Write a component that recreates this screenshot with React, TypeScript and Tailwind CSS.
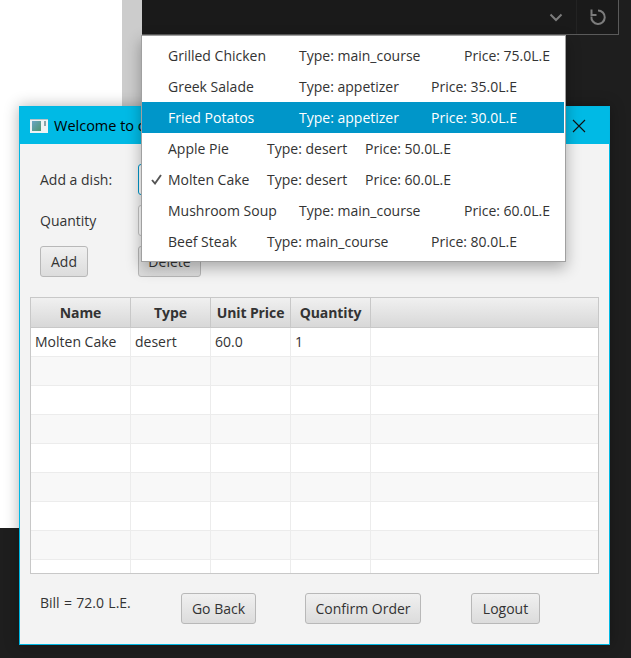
const menu = [
  { name: "Grilled Chicken", type: "Type: main_course", price: "Price: 75.0L.E", nameW: "w-[131px]", typeW: "w-[165px]" },
  { name: "Greek Salade", type: "Type: appetizer", price: "Price: 35.0L.E", nameW: "w-[131px]", typeW: "w-[132px]" },
  { name: "Fried Potatos", type: "Type: appetizer", price: "Price: 30.0L.E", nameW: "w-[131px]", typeW: "w-[132px]", active: true },
  { name: "Apple Pie", type: "Type: desert", price: "Price: 50.0L.E", nameW: "w-[99px]", typeW: "w-[98px]" },
  { name: "Molten Cake", type: "Type: desert", price: "Price: 60.0L.E", nameW: "w-[99px]", typeW: "w-[98px]", checked: true },
  { name: "Mushroom Soup", type: "Type: main_course", price: "Price: 60.0L.E", nameW: "w-[131px]", typeW: "w-[165px]" },
  { name: "Beef Steak", type: "Type: main_course", price: "Price: 80.0L.E", nameW: "w-[99px]", typeW: "w-[164px]" },
];

const columns = ["Name", "Type", "Unit Price", "Quantity"];
const emptyRows = [1, 2, 3, 4, 5, 6, 7];

function FxButton({ label, className }: { label: string; className: string }) {
  return (
    <button className={`h-[31px] shrink-0 rounded-[3px] border border-[#b8b8b8] bg-gradient-to-b from-[#f0f0f0] to-[#dcdcdc] text-[#333] ${className}`}>
      {label}
    </button>
  );
}

function Row({ cells, odd }: { cells: string[]; odd: boolean }) {
  return (
    <div className={`flex h-[29px] shrink-0 border-b border-[#ececec] ${odd ? "bg-[#f8f8f8]" : "bg-white"}`}>
      <div className="w-[100px] shrink-0 border-r border-[#ececec] pl-[4px] leading-[28px]">{cells[0]}</div>
      <div className="w-[80px] shrink-0 border-r border-[#ececec] pl-[4px] leading-[28px]">{cells[1]}</div>
      <div className="w-[80px] shrink-0 border-r border-[#ececec] pl-[4px] leading-[28px]">{cells[2]}</div>
      <div className="w-[80px] shrink-0 border-r border-[#ececec] pl-[4px] leading-[28px]">{cells[3]}</div>
      <div className="flex-1" />
    </div>
  );
}

export default function App() {
  return (
    <div className="relative h-[658px] w-[631px] overflow-hidden bg-[#1e1e1e] font-['Open_Sans','Noto_Sans',sans-serif] text-[14px] text-[#333]">
      {/* stuff behind the dialog */}
      <div className="absolute left-0 top-0 h-[528px] w-[122px] bg-white" />
      <div className="absolute left-[122px] top-0 h-[528px] w-[20px] bg-[#cccccc]" />
      <div className="absolute left-[142px] top-0 flex h-[35px] w-[477px] items-center justify-end border-b border-r border-[#5a5a5a] bg-[#1a1a1a]">
        <svg width="14" height="14" viewBox="0 0 14 14" fill="none" stroke="#7c7c7c" strokeWidth="2" className="mr-[13px]">
          <path d="M1.5 4.5 7 10 12.5 4.5" />
        </svg>
        <div className="h-full w-px bg-[#232323]" />
        <svg width="18" height="18" viewBox="0 0 18 18" fill="none" stroke="#7c7c7c" strokeWidth="2" className="ml-[12px] mr-[11px]">
          <path d="M9 2.5A6.7 6.7 0 1 1 2.4 8.5" />
          <path d="M2.5 1.5V7H7.5" />
        </svg>
      </div>

      {/* dialog */}
      <div className="absolute left-[19px] top-[106px] flex h-[539px] w-[591px] flex-col border border-[#00b7e3] bg-[#f3f3f3] shadow-[0_0_14px_rgba(0,0,0,0.3)]">
        <div className="flex h-[37px] shrink-0 items-center bg-[#00bae5] pl-[10px] text-[14.5px] text-black">
          <svg width="18" height="14" viewBox="0 0 18 14" className="mr-[6px]">
            <defs>
              <linearGradient id="ico" x1="0" y1="0" x2="1" y2="1">
                <stop offset="0" stopColor="#6aa6c4" />
                <stop offset="1" stopColor="#4f9670" />
              </linearGradient>
            </defs>
            <rect x="0" y="0" width="18" height="14" fill="#eef3f4" />
            <rect x="0" y="0" width="18" height="1" fill="#b8c4c8" />
            <rect x="2" y="2" width="9" height="10" fill="url(#ico)" />
            <rect x="14" y="2" width="2" height="5" fill="#8aa4aa" />
          </svg>
          <span>Welcome to o</span>
          <svg width="14" height="14" viewBox="0 0 14 14" fill="none" stroke="#111" strokeWidth="1.1" className="ml-auto mr-[23px]">
            <path d="M1 1 13 13M13 1 1 13" />
          </svg>
        </div>

        <div className="flex flex-1 flex-col px-[10px]">
          <div className="mt-[20px] flex h-[31px] items-center pl-[10px]">
            <span className="w-[98px]">Add a dish:</span>
            <div className="h-[31px] w-[100px] rounded-[3px] border border-[#0096c9] bg-white" />
          </div>
          <div className="mt-[10px] flex h-[31px] items-center pl-[10px]">
            <span className="w-[98px]">Quantity</span>
            <div className="h-[31px] w-[100px] rounded-[3px] border border-[#c4c4c4] bg-white" />
          </div>
          <div className="mt-[10px] flex h-[31px] items-center pl-[10px]">
            <FxButton label="Add" className="w-[48px]" />
            <FxButton label="Delete" className="ml-[50px] w-[63px]" />
          </div>

          <div className="mt-[20px] flex h-[277px] shrink-0 flex-col overflow-hidden border border-[#c8c8c8] bg-white">
            <div className="flex h-[30px] shrink-0 border-b border-[#c8c8c8] bg-gradient-to-b from-[#f0f0f0] to-[#d8d8d8] font-bold tracking-[-0.1px]">
              {columns.map((c, i) => (
                <div
                  key={c}
                  className={`flex shrink-0 items-center justify-center border-r border-[#c8c8c8] ${i === 0 ? "w-[100px]" : "w-[80px]"}`}
                >
                  {c}
                </div>
              ))}
              <div className="flex-1" />
            </div>
            <Row cells={["Molten Cake", "desert", "60.0", "1"]} odd={false} />
            {emptyRows.map((r) => (
              <Row key={r} cells={["", "", "", ""]} odd={r % 2 === 1} />
            ))}
            <Row cells={["", "", "", ""]} odd={false} />
          </div>

          <div className="mt-[19px] flex items-start pl-[10px]">
            <span className="w-[141px] leading-[19px] [word-spacing:0.7px]">Bill = 72.0 L.E.</span>
            <FxButton label="Go Back" className="w-[75px]" />
            <FxButton label="Confirm Order" className="ml-[49px] w-[116px]" />
            <FxButton label="Logout" className="ml-[50px] w-[69px]" />
          </div>
        </div>
      </div>

      {/* open combo popup */}
      <div className="absolute left-[141px] top-[35px] w-[425px] border border-[#a0a0a0] bg-white py-[4px] pr-[1px] shadow-[0_6px_14px_rgba(0,0,0,0.3)]">
        {menu.map((m) => (
          <div
            key={m.name}
            className={`relative flex h-[31px] items-center pl-[26px] ${m.active ? "bg-[#0096c9] text-white" : ""}`}
          >
            {m.checked && (
              <svg width="11" height="11" viewBox="0 0 11 11" fill="none" stroke="#555" strokeWidth="1.9" className="absolute left-[9px] top-[10px]">
                <path d="M1 6 4 9.5 10 1" />
              </svg>
            )}
            <span className={`shrink-0 ${m.nameW}`}>{m.name}</span>
            <span className={`shrink-0 ${m.typeW}`}>{m.type}</span>
            <span className="shrink-0">{m.price}</span>
          </div>
        ))}
      </div>
    </div>
  );
}
